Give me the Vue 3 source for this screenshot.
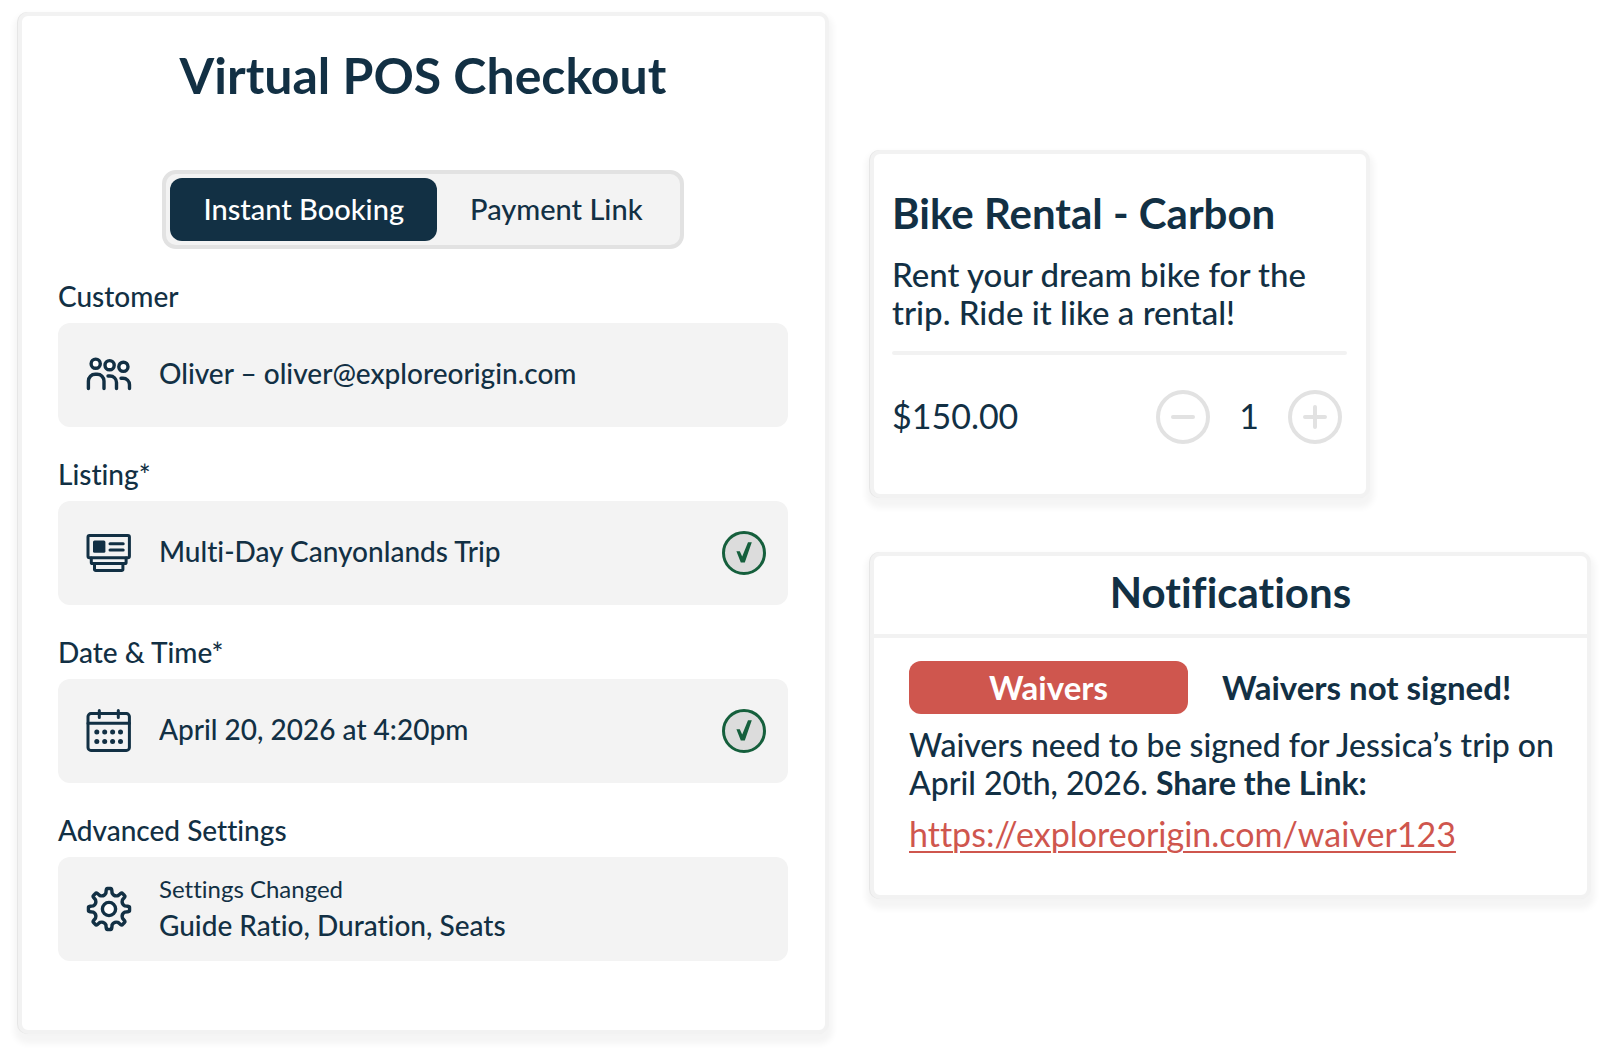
<script setup>
import { ref } from 'vue'

const mode = ref('instant')
const customer = ref('Oliver – oliver@exploreorigin.com')
const listing = ref('Multi-Day Canyonlands Trip')
const date = ref('April 20, 2026 at 4:20pm')
const quantity = ref(1)

// Outline of an eight-tooth gear centred on (23, 23)
const point = (radius, degrees) => {
  const a = (degrees * Math.PI) / 180
  return `${(23 + radius * Math.sin(a)).toFixed(2)} ${(23 - radius * Math.cos(a)).toFixed(2)}`
}
const teeth = []
for (let k = 0; k < 8; k++) {
  const a = k * 45
  teeth.push(
    `${k ? 'L' : 'M'}${point(16.2, a - 11)}L${point(19, a - 8.5)}Q${point(20.8, a - 7)} ${point(20.6, a - 4)}` +
      `L${point(20.6, a + 4)}Q${point(20.8, a + 7)} ${point(19, a + 8.5)}L${point(16.2, a + 11)}` +
      `Q${point(13.2, a + 22.5)} ${point(16.2, a + 34)}`
  )
}
const gear = teeth.join('') + 'Z'
</script>

<template>
  <main class="page">
    <section class="card checkout">
      <h1>Virtual POS Checkout</h1>

      <div class="toggle">
        <button type="button" :class="{ active: mode === 'instant' }" @click="mode = 'instant'">Instant Booking</button>
        <button type="button" :class="{ active: mode === 'link' }" @click="mode = 'link'">Payment Link</button>
      </div>

      <div class="group">
        <label for="customer">Customer</label>
        <div class="field">
          <svg class="icon" viewBox="0 0 46 46" aria-hidden="true">
            <circle cx="9.7" cy="11.7" r="4.6" />
            <circle cx="23.6" cy="13.2" r="4.6" />
            <circle cx="37.4" cy="14.8" r="4.6" />
            <path d="M2.4 36.5V29a6.8 6.8 0 0 1 6.8-6.8h2a6.8 6.8 0 0 1 6.8 6.8v7.5M22 24h2a6.5 6.5 0 0 1 6.5 6.5v6M35 26.2h2a6.5 6.5 0 0 1 6.5 6.5v3.8" />
          </svg>
          <input id="customer" v-model="customer" type="text" />
        </div>
      </div>

      <div class="group">
        <label for="listing">Listing*</label>
        <div class="field">
          <svg class="icon thin" viewBox="0 0 46 46" aria-hidden="true">
            <rect x="2" y="5.6" width="41.4" height="22.2" rx="1.5" />
            <rect class="solid" x="7" y="10.4" width="12.4" height="12.4" rx="1.5" />
            <path d="M24 13.7h13.2M24 20h13.2M5.3 28v4.4a1.2 1.2 0 0 0 1.2 1.2h32.4a1.2 1.2 0 0 0 1.2-1.2V28M8.5 34v5.4a1.2 1.2 0 0 0 1.2 1.2h26a1.2 1.2 0 0 0 1.2-1.2V34" />
          </svg>
          <input id="listing" v-model="listing" type="text" />
          <svg class="check" viewBox="0 0 44 44" role="img" aria-label="Complete">
            <circle cx="22" cy="22" r="20.5" />
            <path d="M14.4 20.2h3.4l2.4 5.2 5.8-14.2h3.8L22.8 31.4h-4z" />
          </svg>
        </div>
      </div>

      <div class="group">
        <label for="date">Date &amp; Time*</label>
        <div class="field">
          <svg class="icon thin" viewBox="0 0 46 46" aria-hidden="true">
            <rect x="2" y="5.6" width="41.4" height="36.8" rx="3" />
            <path d="M2 15.3h41.4M13.3 2.4v7M32.3 2.4v7" />
            <g class="dots">
              <circle v-for="n in 8" :key="n" :cx="10.8 + ((n - 1) % 4) * 7.9" :cy="n > 4 ? 33.6 : 24" r="2.5" />
            </g>
          </svg>
          <input id="date" v-model="date" type="text" />
          <svg class="check" viewBox="0 0 44 44" role="img" aria-label="Complete">
            <circle cx="22" cy="22" r="20.5" />
            <path d="M14.4 20.2h3.4l2.4 5.2 5.8-14.2h3.8L22.8 31.4h-4z" />
          </svg>
        </div>
      </div>

      <div class="group">
        <label for="advanced">Advanced Settings</label>
        <button id="advanced" type="button" class="field">
          <svg class="icon" viewBox="0 0 46 46" aria-hidden="true">
            <path :d="gear" />
            <circle cx="23" cy="23" r="6.6" />
          </svg>
          <span class="settings">
            <span class="note">Settings Changed</span>
            <span>Guide Ratio, Duration, Seats</span>
          </span>
        </button>
      </div>
    </section>

    <div class="side">
      <section class="card rental">
        <h2>Bike Rental - Carbon</h2>
        <p>Rent your dream bike for the trip. Ride it like a rental!</p>
        <hr />
        <div class="purchase">
          <span class="price">$150.00</span>
          <div class="stepper">
            <button type="button" aria-label="Remove one" @click="quantity = Math.max(0, quantity - 1)">
              <svg viewBox="0 0 54 54"><circle cx="27" cy="27" r="25" /><path d="M17 27h20" /></svg>
            </button>
            <output>{{ quantity }}</output>
            <button type="button" aria-label="Add one" @click="quantity++">
              <svg viewBox="0 0 54 54"><circle cx="27" cy="27" r="25" /><path d="M17 27h20M27 17v20" /></svg>
            </button>
          </div>
        </div>
      </section>

      <section class="card notifications">
        <h2>Notifications</h2>
        <div class="notice">
          <div class="headline">
            <span class="badge">Waivers</span>
            <strong>Waivers not signed!</strong>
          </div>
          <p>Waivers need to be signed for Jessica’s trip on April 20th, 2026. <strong>Share the Link:</strong></p>
          <a href="https://exploreorigin.com/waiver123">https://exploreorigin.com/waiver123</a>
        </div>
      </section>
    </div>
  </main>
</template>

<style>
body {
  margin: 0;
  background: #fff;
}
</style>

<style scoped>
.page {
  display: grid;
  grid-template-columns: 811fr 721fr;
  gap: 41px;
  align-items: start;
  padding: 12px 18px 23px;
  color: #123044;
  font-family: Lato, "Open Sans", sans-serif;
  font-weight: 500;
  font-variant-ligatures: none;
}

.page * {
  box-sizing: border-box;
}

h1,
h2,
p {
  margin: 0;
}

button,
input {
  font: inherit;
  font-variant-ligatures: none;
  color: inherit;
}

button {
  padding: 0;
  border: 0;
  background: none;
  cursor: pointer;
}

.card {
  border: 4px solid #f2f2f2;
  border-radius: 10px;
  background: #fff;
  box-shadow: -1px 0 0 #e6e6e6, 0 6px 6px 4px rgba(0, 0, 0, 0.045);
}

.checkout {
  display: flex;
  flex-direction: column;
  gap: 30px;
  padding: 29px 37px 69px 36px;
}

h1 {
  margin-bottom: 35px;
  font-size: 50px;
  line-height: 60px;
  font-weight: 700;
  text-align: center;
}

.toggle {
  display: flex;
  align-self: center;
  padding: 4px;
  border: 4px solid #e2e2e2;
  border-radius: 14px;
  background: #f3f3f3;
}

.toggle button {
  height: 63px;
  padding: 0 33px 2px;
  border-radius: 12px;
  font-size: 29px;
}

.toggle .active {
  background: #123044;
  color: #fff;
}

.group {
  display: flex;
  flex-direction: column;
  gap: 10px;
  font-size: 28px;
  line-height: 34px;
}

.field {
  display: flex;
  align-items: center;
  gap: 27px;
  height: 104px;
  padding: 0 22px 0 28px;
  border-radius: 12px;
  background: #f3f3f3;
  text-align: left;
}

.field input {
  flex: 1;
  min-width: 0;
  height: 100%;
  padding: 0 0 4px;
  border: 0;
  background: none;
  outline: none;
}

.icon {
  flex: none;
  width: 46px;
  height: 46px;
  fill: none;
  stroke: #123044;
  stroke-width: 3.4;
  stroke-linecap: round;
  stroke-linejoin: round;
}

.icon circle {
  fill: #fff;
}

.icon.thin {
  stroke-width: 3;
}

.icon .solid,
.icon .dots circle {
  fill: #123044;
  stroke: none;
}

.check {
  flex: none;
  width: 44px;
  height: 44px;
}

.check circle {
  fill: #dcdcdc;
  stroke: #155f3c;
  stroke-width: 3;
}

.check path {
  fill: #155f3c;
}

.settings {
  display: flex;
  flex-direction: column;
  padding-bottom: 5px;
  line-height: 36px;
}

.note {
  font-size: 24px;
  font-weight: 400;
}

.side {
  display: flex;
  flex-direction: column;
  gap: 54px;
  padding-top: 138px;
}

.side h2 {
  font-size: 42px;
  line-height: 48px;
  font-weight: 700;
}

.side p {
  line-height: 38px;
}

.rental {
  width: 100%;
  max-width: 500px;
  padding: 35px 19px 50px 18px;
}

.rental p {
  margin-top: 18px;
  font-size: 33px;
}

hr {
  height: 4px;
  margin: 20px 0 35px;
  border: 0;
  border-radius: 2px;
  background: #f2f2f2;
}

.purchase,
.stepper {
  display: flex;
  align-items: center;
}

.purchase {
  justify-content: space-between;
  padding-right: 5px;
  font-size: 34px;
  font-weight: 400;
}

.price,
.stepper output {
  padding-bottom: 4px;
}

.stepper button,
.stepper svg {
  display: block;
  width: 54px;
  height: 54px;
}

.stepper svg {
  fill: none;
  stroke: #e2e2e2;
  stroke-width: 4;
  stroke-linecap: round;
}

.stepper output {
  width: 78px;
  text-align: center;
}

.notifications h2 {
  padding: 12px 0 18px;
  border-bottom: 4px solid #f2f2f2;
  text-align: center;
}

.notice {
  padding: 23px 24px 41px 35px;
  font-size: 32px;
  line-height: 38px;
}

.headline {
  display: flex;
  align-items: center;
  gap: 34px;
  margin-bottom: 12px;
  font-size: 33px;
}

.headline strong {
  padding-bottom: 2px;
}

.badge {
  flex: none;
  width: 279px;
  height: 53px;
  border-radius: 12px;
  background: #cf564e;
  color: #fff;
  font-weight: 700;
  line-height: 52px;
  text-align: center;
}

.notice a {
  display: inline-block;
  margin-top: 13px;
  color: #cf564e;
  font-size: 34px;
  font-weight: 400;
  text-decoration-thickness: 2px;
  text-underline-offset: 4px;
}
</style>
